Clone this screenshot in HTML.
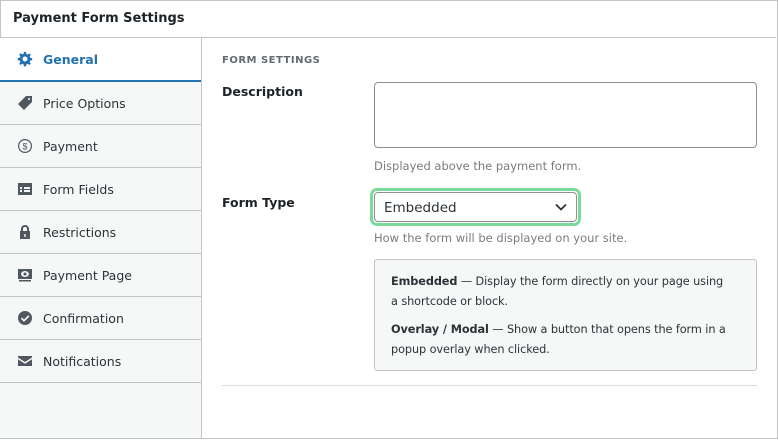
<!DOCTYPE html>
<html><head><style>
*{box-sizing:border-box;margin:0;padding:0}
body{width:778px;height:440px;background:#fff;font-family:"DejaVu Sans","Liberation Sans",sans-serif;color:#1d2327;overflow:hidden;position:relative}
.frame{position:absolute;left:0;top:0;width:778px;height:439px;border:1px solid #c3c4c7}
.hdr{position:absolute;left:0;top:0;width:776px;height:38px;border-bottom:1px solid #c3c4c7;font-weight:bold;font-size:13px;padding:11px 0 0 13px}
.side{position:absolute;left:0;top:38px;width:202px;height:400px;background:#f6f7f7;border-right:1px solid #c3c4c7}
.it{height:43px;border-bottom:1px solid #c3c4c7;display:flex;align-items:center;padding-left:17px;font-size:12.5px;color:#2c3338}
.it svg{width:16px;height:16px;margin-right:10px;fill:#50575e}
.it.act{background:#fff;color:#2271b1;font-weight:bold;border-bottom:2px solid #2271b1;height:44px}
.it.act svg{fill:#2271b1}
.abs{position:absolute}
.lbl{font-weight:bold;font-size:12.5px}
.help{font-size:11.5px;color:#787c82}
</style></head><body>
<div class="frame"></div>
<div class="hdr">Payment Form Settings</div>
<div class="side">
<div class="it act"><svg viewBox="0 0 16 16"><path d="M7 1h2l.4 2 1.3.6 1.7-1.2 1.4 1.4-1.2 1.7.6 1.3 2 .4v2l-2 .4-.6 1.3 1.2 1.7-1.4 1.4-1.7-1.2-1.3.6-.4 2H7l-.4-2-1.3-.6-1.7 1.2-1.4-1.4 1.2-1.7-.6-1.3-2-.4V7l2-.4.6-1.3-1.2-1.7 1.4-1.4 1.7 1.2 1.3-.6zM8 5.5a2.5 2.5 0 100 5 2.5 2.5 0 000-5z"/></svg>General</div>
<div class="it"><svg viewBox="0 0 16 16"><path d="M9 1h6v6l-8 8-6-6zM12 3a1 1 0 100 2 1 1 0 000-2z"/></svg>Price Options</div>
<div class="it"><svg viewBox="0 0 16 16"><path d="M8 1a7 7 0 110 14A7 7 0 018 1zm0 1.2a5.8 5.8 0 100 11.6A5.8 5.8 0 008 2.2z"/><text x="8" y="11.5" font-size="9" text-anchor="middle" fill="#50575e" font-family="Liberation Sans">$</text></svg>Payment</div>
<div class="it"><svg viewBox="0 0 16 16"><path d="M1 2h14v12H1zm2 4v2h2V6zm4 0v2h6V6zm-4 3v2h2V9zm4 0v2h6V9z"/></svg>Form Fields</div>
<div class="it"><svg viewBox="0 0 16 16"><path d="M4 7V5a4 4 0 018 0v2h1v8H3V7zm2 0h4V5a2 2 0 00-4 0zm1.3 3v3h1.4v-3z"/></svg>Restrictions</div>
<div class="it"><svg viewBox="0 0 16 16"><path d="M1 2h14v10H1zm7 2c-2.5 0-4 2-4 3s1.5 3 4 3 4-2 4-3-1.5-3-4-3zm0 1.5a1.5 1.5 0 110 3 1.5 1.5 0 010-3zM2 13h12v1.5H2z"/></svg>Payment Page</div>
<div class="it"><svg viewBox="0 0 16 16"><path d="M8 1a7 7 0 110 14A7 7 0 018 1zm3.3 4.2L7 9.5 5 7.5 3.8 8.7 7 11.9l5.5-5.5z"/></svg>Confirmation</div>
<div class="it"><svg viewBox="0 0 16 16"><path d="M1 3h14v1.5L8 9 1 4.5zm0 3.2l7 4.5 7-4.5V13H1z"/></svg>Notifications</div>
</div>
<div class="abs" style="left:222px;top:55px;font-size:10px;font-weight:bold;color:#646970;letter-spacing:.5px">FORM SETTINGS</div>
<div class="abs lbl" style="left:222px;top:84px">Description</div>
<div class="abs" style="left:374px;top:82px;width:383px;height:66px;border:1px solid #8c8f94;border-radius:4px"></div>
<div class="abs help" style="left:374px;top:159px">Displayed above the payment form.</div>
<div class="abs lbl" style="left:222px;top:195px">Form Type</div>
<div class="abs" style="left:370px;top:188px;width:211px;height:38px;border:3px solid #7bd99a;border-radius:7px"></div>
<div class="abs" style="left:374px;top:192px;width:203px;height:30px;border:1px solid #8c8f94;border-radius:4px;font-size:13.5px;padding:7px 0 0 9px;color:#2c3338">Embedded<svg style="position:absolute;right:9px;top:10px" width="12" height="8" viewBox="0 0 12 8"><path d="M1 1.5l5 5 5-5" stroke="#2c3338" stroke-width="1.8" fill="none"/></svg></div>
<div class="abs help" style="left:374px;top:231px">How the form will be displayed on your site.</div>
<div class="abs" style="left:374px;top:259px;width:383px;height:112px;background:#f6f7f7;border:1px solid #c3c4c7;border-radius:3px;padding:12px 14px 12px 16px;font-size:11.3px;line-height:20px;color:#2c3338;letter-spacing:-0.1px">
<div><b>Embedded</b> — Display the form directly on your page using<br>a shortcode or block.</div>
<div style="margin-top:8px"><b>Overlay / Modal</b> — Show a button that opens the form in a<br>popup overlay when clicked.</div>
</div>
<div class="abs" style="left:222px;top:385px;width:535px;height:1px;background:#dcdcde"></div>
</body></html>
